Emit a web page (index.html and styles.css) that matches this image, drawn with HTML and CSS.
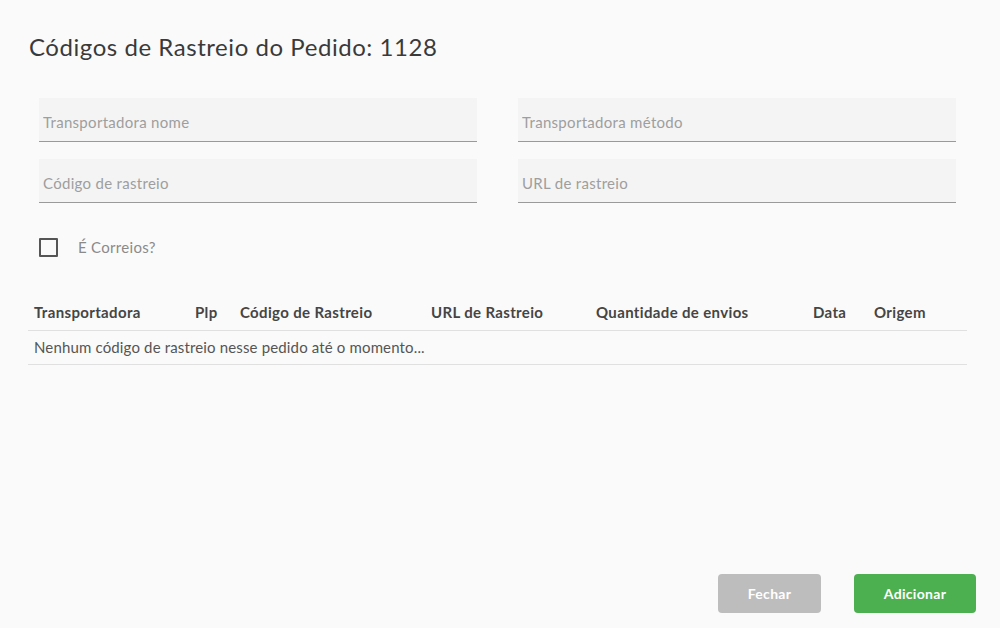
FILE: index.html
```html
<!DOCTYPE html>
<html lang="pt-BR">
<head>
<meta charset="utf-8">
<title>Códigos de Rastreio</title>
<link rel="stylesheet" href="styles.css">
</head>
<body>
<div class="dialog">
  <h1 class="title">Códigos de Rastreio do Pedido: 1128</h1>
  <div class="form">
    <div class="grid">
      <div class="field"><input class="input" type="text" placeholder="Transportadora nome"></div>
      <div class="field"><input class="input" type="text" placeholder="Transportadora método"></div>
      <div class="field"><input class="input" type="text" placeholder="Código de rastreio"></div>
      <div class="field"><input class="input" type="text" placeholder="URL de rastreio"></div>
    </div>
    <label class="check">
      <span class="box"></span>
      <span class="check-label">É Correios?</span>
    </label>
  </div>
  <table class="table">
    <colgroup>
      <col class="c1"><col class="c2"><col class="c3"><col class="c4"><col class="c5"><col class="c6"><col class="c7">
    </colgroup>
    <thead>
      <tr>
        <th>Transportadora</th>
        <th>Plp</th>
        <th>Código de Rastreio</th>
        <th>URL de Rastreio</th>
        <th>Quantidade de envios</th>
        <th>Data</th>
        <th>Origem</th>
      </tr>
    </thead>
    <tbody>
      <tr><td colspan="7">Nenhum código de rastreio nesse pedido até o momento...</td></tr>
    </tbody>
  </table>
  <div class="footer">
    <button class="btn btn-close">Fechar</button>
    <button class="btn btn-add">Adicionar</button>
  </div>
</div>
</body>
</html>
```
FILE: styles.css
```css
* { box-sizing: border-box; }
html, body { margin: 0; height: 100%; }
body {
  background: #fafafa;
  font-family: Lato, "Open Sans", Arial, sans-serif;
  color: #444;
}
.dialog {
  height: 628px;
  display: flex;
  flex-direction: column;
  padding: 0 24px 15px 28px;
}
.title {
  margin: 31px 0 0 1px;
  font-size: 24px;
  line-height: 32px;
  font-weight: 400;
  letter-spacing: 0.55px;
  color: #3a3a3a;
}
.form {
  padding: 0 11px;
  margin: 35px 9px 0 0;
}
.grid {
  display: grid;
  grid-template-columns: 1fr 1fr;
  column-gap: 41px;
  row-gap: 17px;
}
.field {
  background: #f4f4f4;
  border-bottom: 1px solid #9a9a9a;
  height: 44px;
  display: flex;
  align-items: flex-end;
}
.input {
  width: 100%;
  border: 0;
  background: transparent;
  outline: none;
  font-family: inherit;
  font-size: 15px;
  letter-spacing: 0.3px;
  color: #444;
  padding: 0 4px 10px;
}
.input::placeholder { color: #9e9e9e; }
.check {
  display: flex;
  align-items: center;
  margin-top: 34px;
  height: 20px;
}
.box {
  width: 19px;
  height: 19px;
  border: 2px solid #555;
  border-radius: 1px;
}
.check-label {
  margin-left: 20px;
  font-size: 15px;
  letter-spacing: 0.3px;
  color: #8a8a8a;
}
.table {
  margin-top: 37px;
  width: 939px;
  border-collapse: collapse;
  table-layout: fixed;
  font-size: 15px;
  letter-spacing: 0.35px;
}
.c1 { width: 161px; }
.c2 { width: 45px; }
.c3 { width: 191px; }
.c4 { width: 165px; }
.c5 { width: 217px; }
.c6 { width: 61px; }
.c7 { width: 99px; }
.table th {
  text-align: left;
  font-weight: 700;
  color: #454545;
  padding: 0 6px;
  height: 36px;
  border-bottom: 1px solid #e0e0e0;
  white-space: nowrap;
}
.table td {
  padding: 0 6px;
  height: 34px;
  color: #555;
  letter-spacing: 0.15px;
  border-bottom: 1px solid #e0e0e0;
}
.footer {
  margin-top: auto;
  display: flex;
  justify-content: flex-end;
  gap: 33px;
}
.btn {
  height: 39px;
  border: 0;
  border-radius: 4px;
  color: #fff;
  font-family: inherit;
  font-size: 14px;
  font-weight: 700;
  letter-spacing: 0.3px;
}
.btn-close { width: 103px; background: #bdbdbd; }
.btn-add { width: 122px; background: #4caf50; }
```
